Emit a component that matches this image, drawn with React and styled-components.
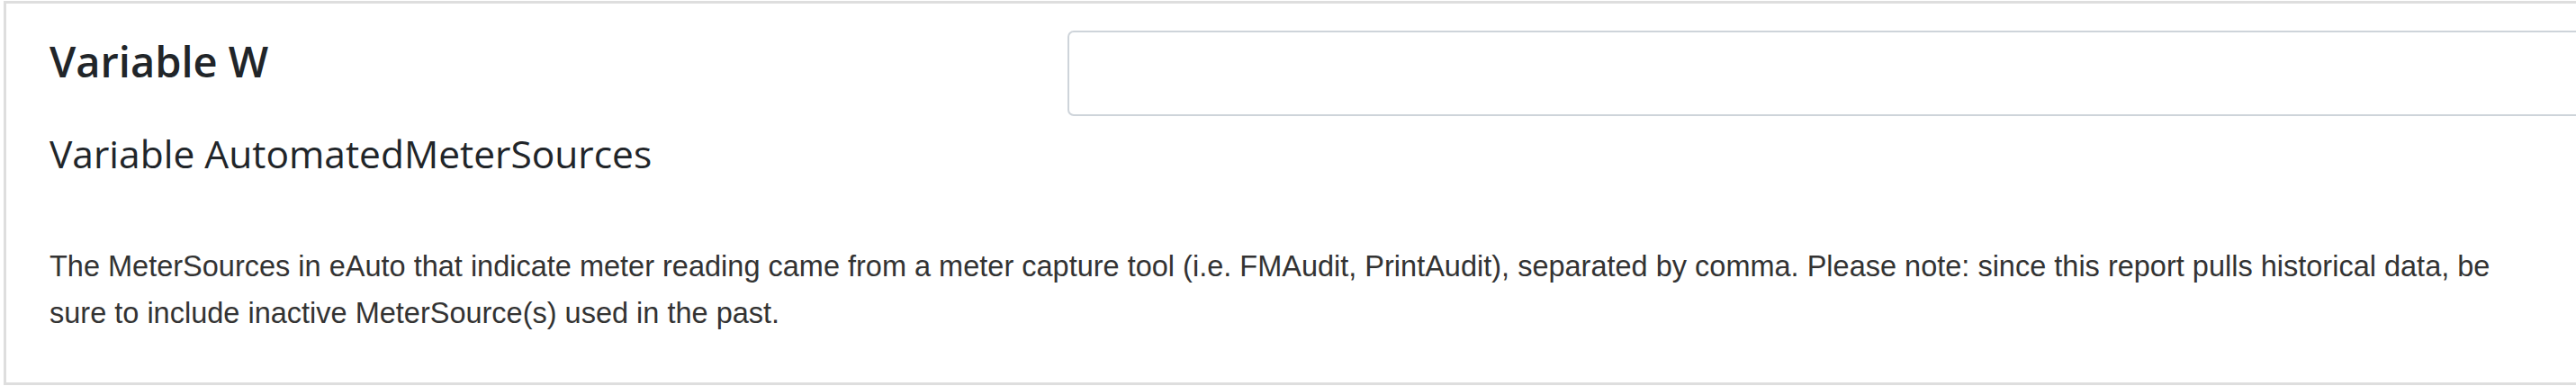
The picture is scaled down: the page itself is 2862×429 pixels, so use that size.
import React from "react";
import styled, { createGlobalStyle } from "styled-components";

const Global = createGlobalStyle`
  html, body { margin: 0; padding: 0; background: #ffffff; overflow: hidden; }
  * { box-sizing: border-box; }
`;

const Panel = styled.section`
  margin: 1px 0 0 4px;
  width: 2920px;
  height: 427px;
  border: 3px solid #dedede;
  border-right: none;
  padding: 30px 0 0 48px;
  background: #fff;
`;

const Header = styled.div`
  display: grid;
  grid-template-columns: 1131px 1fr;
  align-items: start;
`;

const TitleBlock = styled.div`
  display: flex;
  flex-direction: column;
  padding-top: 6px;
`;

const Title = styled.h4`
  margin: 0;
  font-family: "Open Sans", "Noto Sans", sans-serif;
  font-weight: 600;
  font-size: 47px;
  line-height: 56px;
  color: #212529;
`;

const Subtitle = styled.h5`
  margin: 50px 0 0;
  font-family: "Open Sans", "Noto Sans", sans-serif;
  font-weight: 400;
  font-size: 42.5px;
  line-height: 50px;
  color: #212529;
`;

const Field = styled.input`
  width: 100%;
  height: 95px;
  border: 2px solid #ced4da;
  border-radius: 7px;
  background: #fff;
  outline: none;
`;

const Description = styled.p`
  margin: 74px 0 0;
  width: 2760px;
  font-family: "Liberation Sans", Arial, sans-serif;
  font-size: 32.5px;
  line-height: 52px;
  color: #333333;
`;

export default function App() {
  return (
    <>
      <Global />
      <Panel>
        <Header>
          <TitleBlock>
            <Title>Variable W</Title>
            <Subtitle>Variable AutomatedMeterSources</Subtitle>
          </TitleBlock>
          <Field type="text" aria-label="Variable W" />
        </Header>
        <Description>
          The MeterSources in eAuto that indicate meter reading came from a meter capture tool (i.e. FMAudit, PrintAudit), separated by comma. Please note: since this report pulls historical data, be sure to include inactive MeterSource(s) used in the past.
        </Description>
      </Panel>
    </>
  );
}
